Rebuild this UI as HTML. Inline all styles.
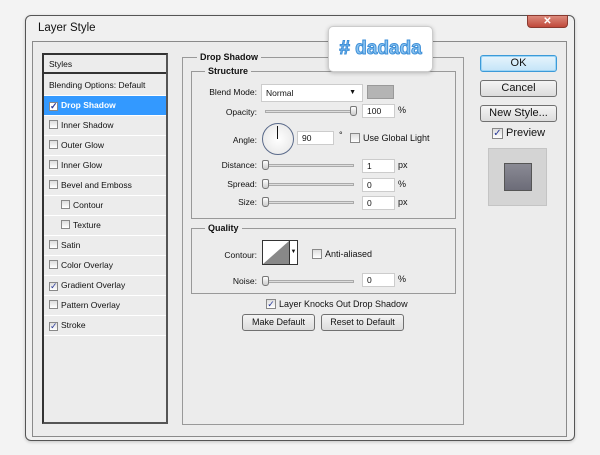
<!DOCTYPE html>
<html><head><style>
*{margin:0;padding:0;box-sizing:border-box}
body{width:600px;height:455px;background:#f3f3f3;font-family:"Liberation Sans",sans-serif;font-size:9px;color:#111;position:relative;overflow:hidden}
.a{position:absolute}
.win{left:25px;top:15px;width:550px;height:426px;border:1px solid #555;border-radius:6px;background:#f0f0f0;box-shadow:0 1px 3px rgba(0,0,0,.2)}
.inner{left:32px;top:41px;width:535px;height:396px;border:1px solid #8a8a8a;background:#ececec}
.list{left:42px;top:53px;width:126px;height:371px;border:2px solid #333;border-right-color:#555;border-bottom-color:#555;background:#ececec}
.row{position:absolute;left:0;width:122px;height:20px;border-bottom:1px solid #fff;line-height:19px;padding-left:5px;font-size:8.5px}
.cb{display:inline-block;width:9px;height:9px;border:1px solid #888;background:linear-gradient(#ddd,#fff);vertical-align:-1px;margin-right:3px;position:relative;font-size:9px;line-height:7px;color:#2a3a9a;text-align:center}
.grp{border:1px solid #999}
.lbl{position:absolute;background:#ececec;font-weight:bold;padding:0 3px;font-size:9px}
.inp{position:absolute;height:14px;background:#fff;border:1px solid #ccc;font-size:8.5px;line-height:12px;padding-left:4px}
.r{position:absolute;text-align:right;font-size:8.5px}
.sl{position:absolute;height:3px;border:1px solid #aaa;background:#ddd}
.th{position:absolute;width:7px;height:10px;border:1px solid #777;border-radius:2px 2px 3px 3px;background:linear-gradient(#fff,#ccc)}
.btn{position:absolute;height:17px;border:1px solid #707070;border-radius:3px;background:linear-gradient(#f4f4f4,#dcdcdc);text-align:center;font-size:11px;line-height:15px}
</style></head><body>
<div class="a win"></div>
<div class="a" style="left:38px;top:22px;font-size:11.5px">Layer Style</div>
<div class="a" style="left:527px;top:15px;width:41px;height:13px;border-radius:0 0 4px 4px;background:linear-gradient(#dc8a7c,#c0493b);border:1px solid #8a3a30;color:#fff;text-align:center;font-weight:bold;font-size:10px;line-height:11px">✕</div>
<div class="a inner"></div>
<div class="a list">
<div class="row" style="top:0;height:19px;border-bottom:2px solid #333">Styles</div>
<div class="row" style="top:21px">Blending Options: Default</div>
<div class="row" style="top:41px;background:#3399ff;color:#fff;font-weight:bold"><span class="cb" style="background:#fff">✓</span>Drop Shadow</div>
<div class="row" style="top:61px"><span class="cb"></span>Inner Shadow</div>
<div class="row" style="top:81px"><span class="cb"></span>Outer Glow</div>
<div class="row" style="top:101px"><span class="cb"></span>Inner Glow</div>
<div class="row" style="top:121px"><span class="cb"></span>Bevel and Emboss</div>
<div class="row" style="top:141px;padding-left:17px"><span class="cb"></span>Contour</div>
<div class="row" style="top:161px;padding-left:17px"><span class="cb"></span>Texture</div>
<div class="row" style="top:181px"><span class="cb"></span>Satin</div>
<div class="row" style="top:201px"><span class="cb"></span>Color Overlay</div>
<div class="row" style="top:221px"><span class="cb">✓</span>Gradient Overlay</div>
<div class="row" style="top:241px"><span class="cb"></span>Pattern Overlay</div>
<div class="row" style="top:261px"><span class="cb">✓</span>Stroke</div>
</div>

<div class="a grp" style="left:182px;top:57px;width:282px;height:368px"></div>
<div class="lbl" style="left:197px;top:52px">Drop Shadow</div>
<div class="a grp" style="left:191px;top:71px;width:265px;height:148px"></div>
<div class="lbl" style="left:205px;top:66px">Structure</div>
<div class="r" style="left:200px;top:87px;width:57px">Blend Mode:</div>
<div class="inp" style="left:261px;top:84px;width:102px;height:18px;line-height:16px">Normal<span style="position:absolute;right:6px;top:0;font-size:7px">▼</span></div>
<div class="a" style="left:367px;top:85px;width:27px;height:14px;background:#b4b4b4;border:1px solid #999"></div>
<div class="r" style="left:200px;top:107px;width:57px">Opacity:</div>
<div class="sl" style="left:265px;top:110px;width:89px"></div><div class="th" style="left:350px;top:106px"></div>
<div class="inp" style="left:362px;top:104px;width:33px">100</div><div class="a" style="left:398px;top:105px">%</div>
<div class="r" style="left:200px;top:135px;width:57px">Angle:</div>
<div class="a" style="left:262px;top:123px;width:32px;height:32px;border-radius:50%;border:1px solid #5a6a8a;background:radial-gradient(#fff,#e4e4e4)"></div>
<div class="a" style="left:277px;top:126px;width:1px;height:13px;background:#111"></div>
<div class="inp" style="left:297px;top:131px;width:37px">90</div><div class="a" style="left:339px;top:130px">°</div>
<div class="a" style="left:350px;top:133px;width:10px;height:10px;border:1px solid #888;background:linear-gradient(#ddd,#fff)"></div>
<div class="a" style="left:363px;top:133px">Use Global Light</div>
<div class="r" style="left:200px;top:160px;width:57px">Distance:</div>
<div class="sl" style="left:262px;top:164px;width:92px"></div><div class="th" style="left:262px;top:160px"></div>
<div class="inp" style="left:362px;top:159px;width:33px">1</div><div class="a" style="left:398px;top:160px">px</div>
<div class="r" style="left:200px;top:179px;width:57px">Spread:</div>
<div class="sl" style="left:262px;top:183px;width:92px"></div><div class="th" style="left:262px;top:179px"></div>
<div class="inp" style="left:362px;top:178px;width:33px">0</div><div class="a" style="left:398px;top:179px">%</div>
<div class="r" style="left:200px;top:197px;width:57px">Size:</div>
<div class="sl" style="left:262px;top:201px;width:92px"></div><div class="th" style="left:262px;top:197px"></div>
<div class="inp" style="left:362px;top:196px;width:33px">0</div><div class="a" style="left:398px;top:197px">px</div>

<div class="a grp" style="left:191px;top:228px;width:265px;height:66px"></div>
<div class="lbl" style="left:205px;top:223px">Quality</div>
<div class="r" style="left:200px;top:250px;width:57px">Contour:</div>
<div class="a" style="left:262px;top:240px;width:36px;height:25px;border:1px solid #333;background:#fff"></div>
<svg class="a" style="left:263px;top:241px" width="26" height="23"><polygon points="0,23 26,0 26,23" fill="#888"/></svg>
<div class="a" style="left:289px;top:241px;width:8px;height:23px;border-left:1px solid #333;background:#fff;font-size:6px;text-align:center;line-height:23px">▼</div>
<div class="a" style="left:312px;top:249px;width:10px;height:10px;border:1px solid #888;background:linear-gradient(#ddd,#fff)"></div>
<div class="a" style="left:325px;top:249px">Anti-aliased</div>
<div class="r" style="left:200px;top:276px;width:57px">Noise:</div>
<div class="sl" style="left:262px;top:280px;width:92px"></div><div class="th" style="left:262px;top:276px"></div>
<div class="inp" style="left:362px;top:273px;width:33px">0</div><div class="a" style="left:398px;top:274px">%</div>
<div class="a" style="left:266px;top:299px;width:10px;height:10px;border:1px solid #888;background:linear-gradient(#ddd,#fff);font-size:9px;line-height:8px;text-align:center;color:#2a3a9a">✓</div>
<div class="a" style="left:279px;top:299px">Layer Knocks Out Drop Shadow</div>
<div class="btn" style="left:242px;top:314px;width:73px;font-size:9px">Make Default</div>
<div class="btn" style="left:321px;top:314px;width:83px;font-size:9px">Reset to Default</div>

<div class="a" style="left:328px;top:26px;width:105px;height:46px;background:#fff;border:1px solid #ccc;border-radius:5px;box-shadow:0 1px 4px rgba(0,0,0,.25);text-align:center;font-weight:bold;font-size:19px;line-height:44px;color:#8cc4f0;-webkit-text-stroke:1px #3d8fd8">#&nbsp;dadada</div>

<div class="btn" style="left:480px;top:55px;width:77px;border-color:#3c9ad8;background:linear-gradient(#e6f4fc,#c4e4f8);box-shadow:0 0 0 1px #9dd5f5 inset">OK</div>
<div class="btn" style="left:480px;top:80px;width:77px">Cancel</div>
<div class="btn" style="left:480px;top:105px;width:77px">New Style...</div>
<div class="a" style="left:492px;top:128px;width:11px;height:11px;border:1px solid #888;background:linear-gradient(#ddd,#fff);font-size:10px;line-height:9px;text-align:center;color:#2a3a9a">✓</div>
<div class="a" style="left:506px;top:127px;font-size:11px">Preview</div>
<div class="a" style="left:488px;top:148px;width:59px;height:58px;background:#d4d4d4;border:1px solid #c4c4c4"></div>
<div class="a" style="left:504px;top:163px;width:28px;height:28px;background:linear-gradient(#8a8a94,#6c6c78);border:1px solid #555"></div>
</body></html>
